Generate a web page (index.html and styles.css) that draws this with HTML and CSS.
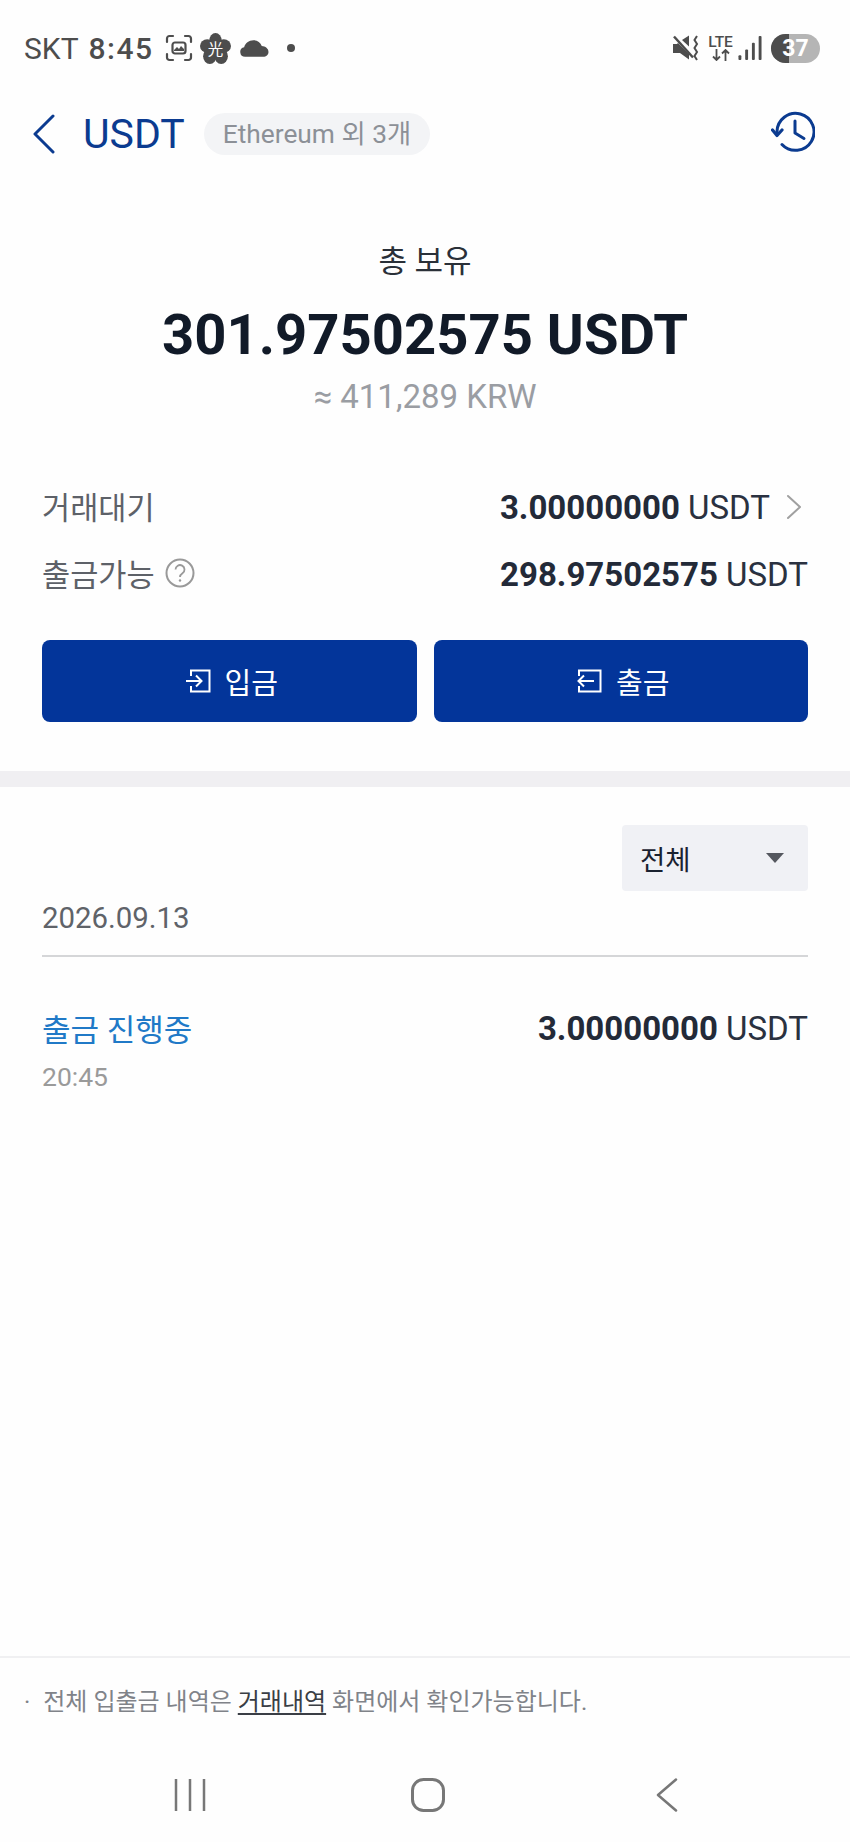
FILE: index.html
```html
<!DOCTYPE html>
<html lang="ko">
<head>
<meta charset="utf-8">
<title>USDT</title>
<link rel="stylesheet" href="styles.css">
</head>
<body>
<div class="page">
  <div class="status">
    <div class="status-left">
      <span class="carrier">SKT</span>
      <span class="clock">8:45</span>
      <svg class="ic-scan" viewBox="0 0 28 28" fill="none" stroke="#4d4d4d" stroke-width="2.200" stroke-linecap="round">
        <path d="M2 8V4.500A2.500 2.500 0 0 1 4.500 2H8M20 2h3.500A2.500 2.500 0 0 1 26 4.500V8M26 20v3.500a2.500 2.500 0 0 1-2.500 2.500H20M8 26H4.500A2.500 2.500 0 0 1 2 23.500V20"/>
        <rect x="7.500" y="8.500" width="13" height="11" rx="2.500"/>
        <path d="M9 16l3-3 2 2 2-3 3 3v2H9z" fill="#4d4d4d" stroke="none"/>
      </svg>
      <svg class="ic-flower" viewBox="0 0 30 30">
        <g fill="#4d4d4d"><ellipse cx="15" cy="7.500" rx="6" ry="7.500"/><ellipse cx="7" cy="12.500" rx="7" ry="6.500"/><ellipse cx="23" cy="12.500" rx="7" ry="6.500"/><ellipse cx="9.500" cy="22.500" rx="6.500" ry="7.500"/><ellipse cx="20.500" cy="22.500" rx="6.500" ry="7.500"/><circle cx="15" cy="15" r="8"/></g>
        <text x="15" y="21" text-anchor="middle" class="flower-text">光</text>
      </svg>
      <svg class="ic-cloud" viewBox="0 0 28 16"><path d="M5 16a4.700 4.700 0 0 1-1-9.300C5 3 8.500 0 13 0c3.800 0 6.800 2.200 8 5.700 3.500.2 6.500 2.600 6.500 5.600 0 2.800-2.300 4.700-5 4.700z" fill="#4d4d4d"/></svg>
      <span class="dot"></span>
    </div>
    <div class="status-right">
      <svg class="ic-mute" viewBox="0 0 28 26">
        <path d="M1 9h4l1-1 11 11v5.500L8 18H1z" fill="#4d4d4d"/>
        <path d="M10 5l7-4.500v11z" fill="#4d4d4d"/>
        <path d="M2 1.500l19 21" stroke="#4d4d4d" stroke-width="2.500"/>
        <path d="M25 1l-2.500 4 2.500 4-2.500 4 2.500 4-2.500 4 2.500 4" fill="none" stroke="#4d4d4d" stroke-width="2"/>
      </svg>
      <div class="lte">
        <span class="lte-text">LTE</span>
        <svg class="ic-arrows" viewBox="0 0 18 12" fill="none" stroke="#4d4d4d" stroke-width="1.800"><path d="M4.500 0v11M1 7.500l3.500 3.500L8 7.500M13.500 12V1M10 4.500L13.500 1 17 4.500"/></svg>
      </div>
      <svg class="ic-signal" viewBox="0 0 24 26" fill="#4d4d4d"><rect x="0" y="20" width="3" height="5" rx="1"/><rect x="7" y="14" width="3" height="11" rx="1"/><rect x="14" y="7" width="3" height="18" rx="1"/><rect x="21" y="0" width="3" height="25" rx="1"/></svg>
      <div class="battery"><span class="battery-fill"></span><span class="battery-num">37</span></div>
    </div>
  </div>

  <header class="topbar">
    <svg class="ic-back" viewBox="0 0 22 40" fill="none" stroke="#0b3b90" stroke-width="3" stroke-linecap="round" stroke-linejoin="round"><path d="M20 2L2 20l18 18"/></svg>
    <h1 class="title">USDT</h1>
    <span class="pill">Ethereum 외 3개</span>
    <svg class="ic-history" viewBox="0 0 44 42" fill="none" stroke="#0b3b90" stroke-width="3" stroke-linecap="round" stroke-linejoin="round">
      <path d="M6 21A18.500 18.500 0 1 1 11 33.500"/>
      <path d="M1.500 19L6 24.500 11 19" stroke-width="3.200"/>
      <path d="M24 10v12l9 5.500"/>
    </svg>
  </header>

  <section class="summary">
    <div class="total-label">총 보유</div>
    <div class="total-value">301.97502575 USDT</div>
    <div class="total-krw">≈ 411,289 KRW</div>
  </section>

  <section class="rows">
    <div class="row">
      <span class="row-label">거래대기</span>
      <span class="row-value"><span><b>3.00000000</b> USDT</span>
        <svg class="ic-next" viewBox="0 0 16 26" fill="none" stroke="#a0a0a0" stroke-width="2" stroke-linecap="round" stroke-linejoin="round"><path d="M2 2l12 11L2 24"/></svg>
      </span>
    </div>
    <div class="row">
      <span class="row-label">출금가능
        <svg class="ic-help" viewBox="0 0 30 30" fill="none" stroke="#999" stroke-width="2"><circle cx="15" cy="15" r="13.500"/><path d="M10.500 11.500a4.500 4.500 0 1 1 7 3.800c-1.700 1.100-2.500 1.900-2.500 3.700" stroke-width="1.800"/><circle cx="15" cy="22.500" r="1.200" fill="#999" stroke="none"/></svg>
      </span>
      <span class="row-value"><span><b>298.97502575</b> USDT</span></span>
    </div>
  </section>

  <div class="actions">
    <button class="btn" type="button">
      <svg class="ic-btn" viewBox="0 0 26 24" fill="none" stroke="#fff" stroke-width="2"><path d="M6 7V1.500h18.500v21H6V17"/><path d="M1 12h15M11 6.500l5.500 5.500-5.500 5.500"/></svg>
      입금
    </button>
    <button class="btn" type="button">
      <svg class="ic-btn" viewBox="0 0 26 24" fill="none" stroke="#fff" stroke-width="2"><path d="M3 7V1.500h21.500v21H3V17"/><path d="M18 12H2.500M8 6.500L2.500 12 8 17.500"/></svg>
      출금
    </button>
  </div>

  <div class="band"></div>

  <section class="history">
    <div class="filter-row">
      <div class="select"><span>전체</span><span class="caret"></span></div>
    </div>
    <div class="date">2026.09.13</div>
    <div class="tx">
      <div class="tx-main">
        <span class="tx-status">출금 진행중</span>
        <span class="tx-amount"><b>3.00000000</b> USDT</span>
      </div>
      <div class="tx-time">20:45</div>
    </div>
  </section>

  <footer class="note">
    <span class="note-dot">·</span>
    <span>전체 입출금 내역은 <a class="note-link">거래내역</a> 화면에서 확인가능합니다.</span>
  </footer>

  <nav class="navbar">
    <svg class="ic-recent" viewBox="0 0 32 34" fill="none" stroke="#777" stroke-width="2.500"><path d="M2 1v32M16 1v32M30 1v32"/></svg>
    <svg class="ic-home" viewBox="0 0 34 34" fill="none" stroke="#777" stroke-width="3"><rect x="1.500" y="1.500" width="31" height="31" rx="11"/></svg>
    <svg class="ic-navback" viewBox="0 0 22 34" fill="none" stroke="#777" stroke-width="2.500" stroke-linecap="round" stroke-linejoin="round"><path d="M20 1.500L2 17l18 15.500"/></svg>
  </nav>
</div>
</body>
</html>
```

FILE: styles.css
```css
* { box-sizing: border-box; }
html, body { margin: 0; padding: 0; }
body {
  background: #fefefe;
  font-family: Roboto, "Noto Sans CJK KR", sans-serif;
  color: #1a2230;
}
.page {
  width: 850px;
  height: 1842px;
  display: flex;
  flex-direction: column;
  overflow: hidden;
  background: #fefefe;
}

/* status bar */
.status {
  height: 92px;
  display: flex;
  justify-content: space-between;
  align-items: flex-start;
  padding: 33px 30px 0 24px;
  color: #4d4d4d;
}
.status-left, .status-right { display: flex; align-items: center; height: 30px; }
.carrier { font-size: 30px; line-height: 30px; position: relative; top: 1px; }
.clock { font-size: 30px; line-height: 30px; font-weight: 500; margin-left: 10px; letter-spacing: 1.500px; position: relative; top: 1px; }
.ic-scan { width: 28px; height: 28px; margin-left: 11px; }
.ic-flower { width: 31px; height: 31px; margin-left: 7px; }
.flower-text { font-size: 15px; fill: #fff; font-family: "Noto Sans CJK KR", sans-serif; }
.ic-cloud { width: 29px; height: 17px; margin-left: 9px; }
.dot { width: 8px; height: 8px; border-radius: 50%; background: #4d4d4d; margin-left: 18px; }
.ic-mute { width: 28px; height: 26px; margin-left: 1px; }
.lte { display: flex; flex-direction: column; align-items: center; margin-left: 8px; width: 25px; }
.lte-text { font-size: 15.500px; line-height: 13px; font-weight: 500; }
.ic-arrows { width: 18px; height: 12px; }
.ic-signal { width: 24px; height: 25px; margin-left: 5px; }
.battery {
  position: relative;
  width: 49px;
  height: 29px;
  margin-left: 9px;
  border-radius: 15px;
  background: #b5b5b5;
  overflow: hidden;
  display: flex;
  align-items: center;
  justify-content: center;
}
.battery-fill { position: absolute; left: 0; top: 0; bottom: 0; width: 18px; background: #4d4d4d; }
.battery-num { position: relative; color: #fff; font-size: 23px; font-weight: 700; }

/* top bar */
.topbar {
  height: 84px;
  display: flex;
  align-items: center;
  padding: 0 35px 0 33px;
}
.ic-back { width: 22px; height: 40px; }
.title { margin: 0 0 0 28px; font-size: 41px; font-weight: 400; color: #0b3b90; line-height: 1; }
.pill {
  margin-left: 19px;
  height: 42px;
  padding: 0 19px;
  border-radius: 21px;
  background: #f3f4f6;
  color: #8c9097;
  font-size: 26.300px;
  line-height: 42px;
  white-space: nowrap;
}
.ic-history { width: 44px; height: 42px; margin-left: auto; margin-bottom: 4px; }

/* summary */
.summary { display: flex; flex-direction: column; align-items: center; padding-top: 64px; }
.total-label { font-size: 31px; line-height: 44px; color: #2a3038; }
.total-value { font-size: 56.200px; line-height: 72px; font-weight: 700; margin-top: 15px; color: #111a28; }
.total-krw { font-size: 33px; line-height: 44px; color: #9a9da3; margin-top: 4px; }

/* rows */
.rows { padding: 65px 42px 0; display: flex; flex-direction: column; gap: 23px; }
.row { display: flex; justify-content: space-between; align-items: center; height: 44px; }
.row-label { font-size: 30.600px; color: #5d6168; display: flex; align-items: center; gap: 10px; }
.row-value { font-size: 33px; color: #2a3140; display: flex; align-items: center; padding-top: 2px; }
.row-value b { font-weight: 700; color: #232a38; }
.ic-next { width: 16px; height: 26px; margin-left: 16px; margin-right: 6px; }
.ic-help { width: 30px; height: 30px; }

/* buttons */
.actions { display: flex; gap: 17px; padding: 0 42px; margin-top: 45px; }
.btn {
  flex: 1;
  height: 82px;
  border: 0;
  border-radius: 8px;
  background: #03359a;
  color: #fff;
  font-family: inherit;
  font-size: 29px;
  display: flex;
  align-items: center;
  justify-content: center;
  gap: 14px;
  padding: 0 0 0 4px;
}
.ic-btn { width: 26px; height: 24px; }

.band { height: 16px; background: #f0eff2; margin-top: 49px; }

/* history */
.history { padding: 38px 42px 0; }
.filter-row { display: flex; justify-content: flex-end; }
.select {
  width: 186px;
  height: 66px;
  background: #f0f1f5;
  border-radius: 4px;
  padding: 0 24px 0 18px;
  display: flex;
  align-items: center;
  justify-content: space-between;
  font-size: 27.500px;
  color: #1a2230;
}
.caret {
  width: 0;
  height: 0;
  border-left: 9px solid transparent;
  border-right: 9px solid transparent;
  border-top: 10px solid #55585f;
}
.date {
  font-size: 29.400px;
  line-height: 40px;
  color: #5f6369;
  margin-top: 7px;
  border-bottom: 2px solid #d5d6d8;
  height: 59px;
}
.tx { padding-top: 46px; }
.tx-main { display: flex; justify-content: space-between; align-items: center; height: 48px; }
.tx-status { font-size: 31px; color: #2079c7; }
.tx-amount { font-size: 33px; color: #2a3140; padding-top: 3px; }
.tx-amount b { font-weight: 700; color: #232a38; }
.tx-time { font-size: 26.500px; line-height: 36px; color: #9a9a9a; margin-top: 8px; }

/* footer */
.note {
  margin-top: auto;
  height: 90px;
  border-top: 2px solid #f0f0f2;
  padding: 24px 0 0 24px;
  display: flex;
  gap: 13px;
  font-size: 24px;
  line-height: 40px;
  color: #808389;
}
.note-link { color: #3a3e45; text-decoration: underline; text-underline-offset: 3px; }
.navbar {
  height: 96px;
  padding: 32px 0 0 0;
  display: flex;
  align-items: flex-start;
}
.ic-recent { width: 32px; height: 34px; margin-left: 174px; }
.ic-home { width: 34px; height: 34px; margin-left: 205px; }
.ic-navback { width: 22px; height: 34px; margin-left: 211px; }
```
